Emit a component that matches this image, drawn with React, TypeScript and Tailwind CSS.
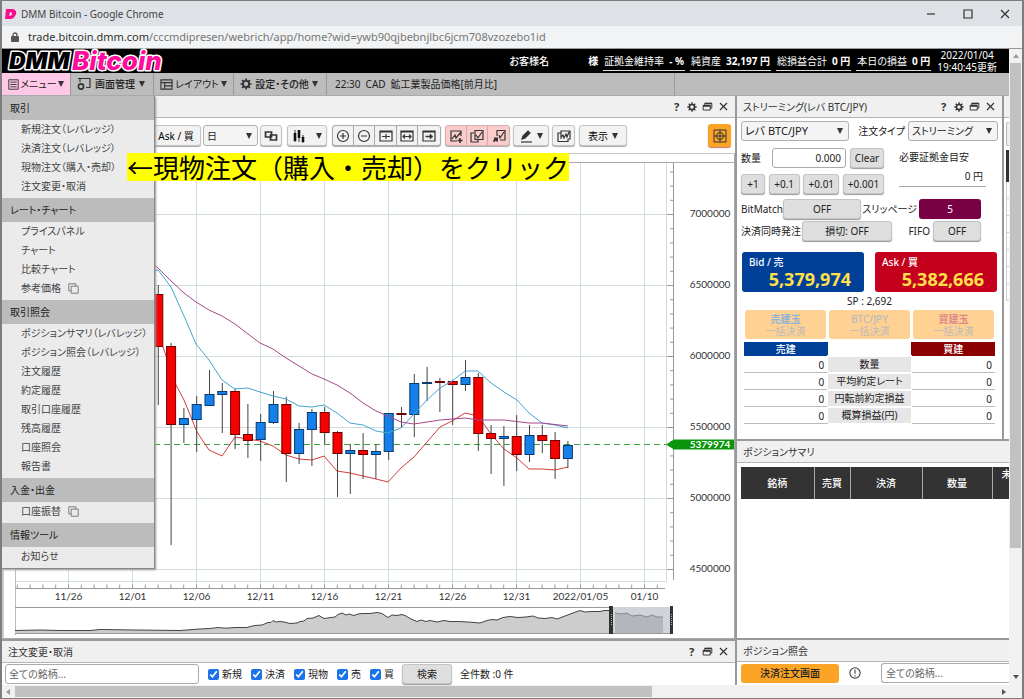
import React from 'react';

const MENU = [
  { title: '取引', items: ['新規注文（レバレッジ）', '決済注文（レバレッジ）', '現物注文（購入・売却）', '注文変更・取消'] },
  { title: 'レート・チャート', items: ['プライスパネル', 'チャート', '比較チャート', '参考価格'], external: '参考価格' },
  {
    title: '取引照会',
    items: [
      'ポジションサマリ（レバレッジ）',
      'ポジション照会（レバレッジ）',
      '注文履歴',
      '約定履歴',
      '取引口座履歴',
      '残高履歴',
      '口座照会',
      '報告書',
    ],
  },
  { title: '入金・出金', items: ['口座振替'], external: '口座振替' },
  { title: '情報ツール', items: ['お知らせ'] },
];

// [high, body top, body bottom, low, rising]
const CANDLES: [number, number, number, number, boolean][] = [
  [285, 294, 346, 405, false],
  [343, 346, 424, 545, false],
  [408, 418, 424, 443, true],
  [396, 404, 419, 452, true],
  [370, 394, 405, 405, true],
  [383, 391, 394, 433, true],
  [388, 391, 434, 449, false],
  [404, 434, 440, 458, false],
  [414, 422, 439, 461, true],
  [391, 404, 422, 424, true],
  [397, 404, 453, 482, false],
  [423, 429, 453, 464, true],
  [409, 412, 429, 466, true],
  [407, 412, 432, 444, false],
  [431, 432, 453, 497, false],
  [444, 450, 453, 494, true],
  [433, 450, 454, 479, false],
  [444, 451, 454, 479, true],
  [413, 413, 451, 460, true],
  [407, 413, 414, 428, false],
  [374, 383, 414, 437, true],
  [367, 382, 383, 401, true],
  [378, 381, 382, 412, false],
  [380, 381, 384, 425, false],
  [360, 377, 384, 391, true],
  [373, 377, 433, 451, false],
  [425, 433, 438, 474, false],
  [426, 436, 438, 486, true],
  [415, 436, 454, 471, false],
  [425, 435, 454, 462, true],
  [425, 435, 440, 453, false],
  [432, 440, 458, 479, false],
  [441, 445, 458, 468, true],
];

const LINE_FAST =
  '154,271 158,270 171,287 184,316 196,344 209,360 222,380 235,389 248,388 260,392 273,396 286,399 299,406 312,407 324,405 337,413 350,423 363,425 376,431 388,433 401,428 414,414 427,400 440,388 452,381 465,371 478,371 491,383 504,392 517,400 529,413 542,423 555,425 568,428';
const LINE_SLOW =
  '154,265 158,268 171,281 184,293 196,302 209,310 222,316 235,324 248,334 260,343 273,349 286,358 299,366 312,374 324,379 337,385 350,393 363,403 376,411 388,416 401,422 414,424 427,422 440,420 452,419 465,418 478,420 504,420 529,423 542,423 568,426';
const LINE_LOW =
  '163,347 176,385 184,400 197,432 209,450 222,456 235,437 248,439 260,441 273,446 286,455 299,459 312,460 324,456 337,471 350,473 363,476 376,479 388,482 401,468 414,457 427,442 440,427 452,421 465,413 478,416 491,434 504,449 517,458 529,469 542,469 555,470 568,467';
const NAV_LINE =
  '15,630.5 40,630 60,630.5 90,630.5 100,629.5 135,630 180,630.5 200,629 210,628.5 218,627.5 226,628.2 235,627.5 247,627.5 250,626.5 255,625.5 262,625 268,622.5 271,622.5 273,620.5 276,622 280,621.5 284,622 290,623.5 297,623 300,621.5 304,621 307,618.5 313,618 319,615.5 324,618.5 331,617.5 335,617 338,614.5 342,613 346,615 349,614 354,615.5 358,614 362,613.5 370,613.5 377,612.5 382,613.5 388,617.5 392,615 397,615.5 402,614.5 406,616 411,619 417,621.5 421,620 426,621.5 430,620.5 437,622 444,620.5 450,621.5 458,621.5 468,622 480,623 487,620.5 492,619.5 497,620 503,617.5 510,616.5 518,617.5 526,617 533,616 538,618 545,618.5 552,617.5 557,619 565,616 573,613 580,610.5 585,612 592,611.5 600,611.5 604,610.5 609,610.5';
const NAV_SELECTED = '615,613 621,614 627,613 632,616 640,615 647,617 652,615 657,617 663,617';

const DATES = ['11/26', '12/01', '12/06', '12/11', '12/16', '12/21', '12/26', '12/31', '2022/01/05', '01/10'];
const PRICES = ['7000000', '6500000', '6000000', '5500000', '5000000', '4500000'];

const grayButton = 'shrink-0 rounded-[3px] border border-[#c4c4c4] bg-[#dedede] text-[#222] shadow-[0_1px_1px_#999]';
const toolButton = 'flex h-[21px] shrink-0 items-center justify-center rounded-[3px] border border-[#c4c4c4] bg-[#f2f2f2] shadow-[0_1px_1px_#aaa]';

type IconProps = { children: React.ReactNode; className?: string };

const Icon = ({ children, className = 'size-[14px]' }: IconProps) => (
  <svg viewBox="0 0 14 14" className={className} fill="none" stroke="#333" strokeWidth="1.2" aria-hidden="true">
    {children}
  </svg>
);

const GearIcon = ({ className = 'size-[12px]' }: { className?: string }) => (
  <Icon className={className}>
    <circle cx="7" cy="7" r="3.6" strokeWidth="2.2" />
    <path d="M7 0.5v2.5M7 11v2.5M0.5 7h2.5M11 7h2.5M2.4 2.4l1.8 1.8M9.8 9.8l1.8 1.8M11.6 2.4l-1.8 1.8M4.2 9.8l-1.8 1.8" strokeWidth="2" />
  </Icon>
);

const CopyIcon = () => (
  <Icon className="size-[11px]">
    <path d="M4 4h9v9H4zM4 10H1V1h9v3" stroke="#777" />
  </Icon>
);

const Caret = ({ className = '' }: { className?: string }) => (
  <svg viewBox="0 0 6 6" className={`size-[6px] shrink-0 ${className}`} aria-hidden="true">
    <path d="M0 0h6L3 6z" fill="#333" />
  </svg>
);

const PanelTitle = ({ title, tools }: { title: string; tools: 'full' | 'short' | 'none' }) => (
  <div className="flex h-[22px] shrink-0 items-center border-b border-[#b5b5b5] bg-[#f0f0f0] px-[6px] text-[#333]">
    <h2 className="whitespace-nowrap">{title}</h2>
    {tools !== 'none' && (
      <div className="ml-auto flex items-center gap-[5px]">
        <button aria-label="ヘルプ" className="flex w-[11px] justify-center text-[11px] font-bold">?</button>
        {tools === 'full' && (
          <button aria-label="設定"><GearIcon className="size-[10px]" /></button>
        )}
        <button aria-label="別ウィンドウ">
          <Icon className="size-[11px]">
            <path d="M3.5 5V3h9v6h-2M1.5 5.5h9v6h-9z" />
            <path d="M1.5 6.2h9M3.5 3.2h9" strokeWidth="2" />
          </Icon>
        </button>
        <button aria-label="閉じる">
          <Icon className="size-[11px]"><path d="M2.5 2.5l9 9M11.5 2.5l-9 9" strokeWidth="1.5" /></Icon>
        </button>
      </div>
    )}
  </div>
);

type SelectProps = { label: string; value: string; className: string };

const Select = ({ label, value, className }: SelectProps) => (
  <span className={`relative flex shrink-0 items-center ${className}`}>
    <select
      aria-label={label}
      className="h-full w-full appearance-none rounded-[3px] border border-[#b0b0b0] bg-[#f4f4f4] px-[3px] text-[#222]"
    >
      <option>{value}</option>
    </select>
    <Caret className="pointer-events-none absolute right-[6px]" />
  </span>
);

const TitleBar = () => (
  <div className="flex h-[25px] items-center bg-[#dee1e6] pl-[3px] text-[10px] text-[#444]">
    <svg viewBox="0 0 12 12" className="mr-[4px] size-[12px]" aria-hidden="true">
      <path d="M1 1h5c4 0 6 2 5 5s-3 5-6 5H0zM5 4L4 8c2 0 3-1 3-2s0-2-2-2z" fill="#ff0c8e" fillRule="evenodd" />
    </svg>
    <span>DMM Bitcoin - Google Chrome</span>
    <div className="ml-auto flex items-center gap-[23px] pr-[10px]">
      <button aria-label="最小化"><Icon><path d="M3 7h8" /></Icon></button>
      <button aria-label="最大化"><Icon><path d="M3 3h8v8H3z" /></Icon></button>
      <button aria-label="閉じる"><Icon><path d="M3 3l8 8M11 3l-8 8" /></Icon></button>
    </div>
  </div>
);

const AddressBar = () => (
  <div className="flex h-[23px] items-center border-b border-[#999] bg-[#f1f3f4] pl-[9px] text-[11px] text-[#777]">
    <svg viewBox="0 0 8 10" className="mr-[9px] h-[10px] w-[8px]" aria-hidden="true">
      <rect x="0" y="4" width="8" height="6" rx="1" fill="#555" />
      <path d="M2 5V3a2 2 0 0 1 4 0v2" fill="none" stroke="#555" strokeWidth="1.3" />
    </svg>
    <span><span className="text-[#333]">trade.bitcoin.dmm.com</span>/cccmdipresen/webrich/app/home?wid=ywb90qjbebnjlbc6jcm708vzozebo1id</span>
  </div>
);

const Stat = ({ label, value }: { label: string; value: string }) => (
  <div className="flex h-[19px] items-center gap-[5px] border-b border-[#ddd] px-px">
    <span>{label}</span>
    <b>{value}</b>
  </div>
);

const AppHeader = () => (
  <header className="flex h-[24px] items-center bg-black pl-[3px] text-[10px] whitespace-nowrap text-white">
    <svg viewBox="0 0 166 24" className="h-[24px] w-[166px] overflow-visible" role="img" aria-label="DMM Bitcoin">
      <g fontFamily="Inter, sans-serif" fontStyle="italic" stroke="#fff" strokeWidth="3" strokeLinejoin="round" paintOrder="stroke">
        <text x="4" y="20" fontWeight="900" fontSize="23" fill="#000">DMM</text>
        <text x="67" y="21" fontWeight="800" fontSize="26" fill="#ff0c9c">Bitcoin</text>
      </g>
    </svg>
    <div className="ml-auto flex items-center gap-[5px]">
      <span className="mr-[34px] font-medium">お客様名</span>
      <span className="font-bold">様</span>
      <Stat label="証拠金維持率" value="- %" />
      <Stat label="純資産" value="32,197 円" />
      <Stat label="総損益合計" value="0 円" />
      <Stat label="本日の損益" value="0 円" />
    </div>
    <div className="mr-[12px] ml-[6px] text-center leading-[12px]">
      <div>2022/01/04</div>
      <div>19:40:45更新</div>
    </div>
  </header>
);

const menuTab = 'flex items-center justify-between border-r border-[#999] px-[6px]';

const MenuBar = () => (
  <nav className="flex h-[23px] border-b border-[#aaa] bg-[#bcbcbc] whitespace-nowrap text-[#222]">
    <button className={`${menuTab} w-[69px] bg-[#ffc8e6]`}>
      <Icon className="size-[11px]"><path d="M1 1h12v12H1zM3 4h8M3 7h8M3 10h8" /></Icon>
      メニュー
      <Caret />
    </button>
    <button className={`${menuTab} w-[83px] font-medium`}>
      <Icon className="size-[14px]">
        <path d="M3 5V1.500h10v9H9M1 1.500h12" />
        <circle cx="4" cy="9.500" r="2.600" strokeWidth="1.600" />
      </Icon>
      画面管理
      <Caret className="mr-[2px]" />
    </button>
    <button className={`${menuTab} w-[80px]`}>
      <Icon className="size-[13px]"><path d="M1 2h12v10H1zM1 5h12M5 5v7M5 8.500h8" /></Icon>
      レイアウト
      <Caret />
    </button>
    <button className={`${menuTab} w-[93px] font-medium`}>
      <GearIcon />
      設定・その他
      <Caret className="mr-[2px]" />
    </button>
    <p className="flex w-[348px] items-center gap-[5px] border-r border-[#999] pl-[8px]">
      <span>22:30</span>
      <span>CAD</span>
      <span>鉱工業製品価格[前月比]</span>
    </p>
  </nav>
);

const DropdownMenu = () => (
  <div className="absolute top-0 left-0 z-10 w-[153px] border-r border-b border-[#888] bg-[#ebebeb] text-[#444] shadow-[1px_1px_2px_#999]">
    {MENU.map((group) => (
      <section key={group.title}>
        <h3 className="bg-[#bcbcbc] pl-[8px] leading-[24px] text-[#222]">{group.title}</h3>
        <ul className="pb-[2px]">
          {group.items.map((item) => (
            <li key={item}>
              <a href="#" className="flex items-center gap-[7px] pl-[19px] leading-[19px] whitespace-nowrap">
                {item}
                {group.external === item && <CopyIcon />}
              </a>
            </li>
          ))}
        </ul>
      </section>
    ))}
  </div>
);

const ChartToolbar = () => (
  <div className="flex h-[36px] items-center border-b border-[#c8c8c8] bg-white pr-[4px] pl-[149px]">
    <button className={`${toolButton} w-[50px]`}>Ask / 買</button>
    <Select label="足種" value="日" className="ml-[2px] h-[21px] w-[55px]" />
    <button aria-label="連動" className={`${toolButton} ml-[2px] w-[22px]`}>
      <Icon><path d="M1.500 3h6v5h-6zM6.500 6h6v5h-6z" strokeWidth="1.700" /></Icon>
    </button>
    <button aria-label="チャート種別" className={`${toolButton} ml-[5px] w-[40px] gap-[10px]`}>
      <Icon><path d="M3 1v12M7 5v8M11 6v8" strokeWidth="1" /><path d="M3 4v8M7 1v8M11 8v5" strokeWidth="2.600" stroke="#111" /></Icon>
      <Caret />
    </button>
    <div className="ml-[5px] flex h-[21px] shrink-0 divide-x divide-[#aaa] overflow-hidden rounded-[3px] border border-[#aaa] bg-[#f2f2f2] shadow-[0_1px_1px_#aaa]">
      <button aria-label="拡大" className="flex w-[21px] items-center justify-center">
        <Icon><circle cx="7" cy="7" r="5.500" /><path d="M4 7h6M7 4v6" /></Icon>
      </button>
      <button aria-label="縮小" className="flex w-[21px] items-center justify-center">
        <Icon><circle cx="7" cy="7" r="5.500" /><path d="M4 7h6" /></Icon>
      </button>
      <button aria-label="全体表示" className="flex w-[22px] items-center justify-center">
        <Icon><path d="M1 2h12v10H1zM1 3h12M3 7.500h8M7 5v5" /></Icon>
      </button>
      <button aria-label="横幅調整" className="flex w-[21px] items-center justify-center">
        <Icon><path d="M1 2h12v10H1zM1 3h12M3 7.500h8M5 5.500l-2 2 2 2M9 5.500l2 2-2 2" /></Icon>
      </button>
      <button aria-label="最新へ" className="flex w-[22px] items-center justify-center">
        <Icon><path d="M1 2h12v10H1zM1 3h12" /><path d="M3.500 7.500h5" strokeWidth="1.600" /><path d="M8 5l3 2.500L8 10z" fill="#333" strokeWidth="0.500" /></Icon>
      </button>
    </div>
    <div className="ml-[4px] flex h-[21px] shrink-0 divide-x divide-[#d9a5a5] overflow-hidden rounded-[3px] border border-[#d3b0b0] bg-[#facccc] shadow-[0_1px_1px_#aaa]">
      <button aria-label="描画追加" className="flex w-[21px] items-center justify-center">
        <Icon><path d="M8 12H2V2h10v5M3 10l3-4 1 3 5-6" /><path d="M11 9v5M8.500 11.500h5" strokeWidth="1.600" /></Icon>
      </button>
      <button aria-label="描画複製" className="flex w-[21px] items-center justify-center">
        <Icon><path d="M5 1.500h8v9H5zM4 4H1v9h7v-2M6 6l2 3 4-6" /></Icon>
      </button>
      <button aria-label="描画移動" className="flex w-[21px] items-center justify-center">
        <Icon><path d="M5 7V1.500h8V11H8M7 6l1 3 4-6" /><path d="M1.500 12.500l3-3M2 9.500h3v3" strokeWidth="2" /></Icon>
      </button>
    </div>
    <button aria-label="ペン" className={`${toolButton} ml-[3px] w-[36px] gap-[4px]`}>
      <Icon><path d="M2 13h11" /><path d="M3 10l1-3 5-5 2 2-5 5z" fill="#333" /></Icon>
      <Caret />
    </button>
    <button aria-label="重ね表示" className={`${toolButton} ml-[3px] w-[23px]`}>
      <Icon><path d="M4 3V2h9v8h-2M11 10v2.500H1V4h3M4 3v7M4 8l2-2 1 3 2-4 1 3 2-5" /></Icon>
    </button>
    <button className={`${toolButton} ml-[4px] w-[48px] gap-[4px]`}>表示 <Caret /></button>
    <button aria-label="十字線" className="ml-auto flex size-[23px] items-center justify-center rounded-[3px] bg-[#fba426] shadow-[0_1px_1px_#b76]">
      <Icon><path d="M1 1h12v12H1zM7 1v12M1 7h12" strokeWidth="1" /><circle cx="7" cy="7" r="3.500" strokeWidth="1" /></Icon>
    </button>
  </div>
);

const Chart = () => (
  <svg viewBox="4 163 730 475" className="block w-full" role="img" aria-label="BTC/JPY 日足チャート">
    <rect x="4" y="163" width="730" height="475" fill="#fff" />
    <g stroke="#d3dcdc">
      {DATES.map((d, i) => <path key={d} d={`M${68.5 + i * 64} 163V588`} />)}
      {PRICES.map((p, i) => <path key={p} d={`M15 ${214.5 + i * 71}H667`} />)}
      <path d="M15 581.500H666M666.500 163V582" />
    </g>
    <path d="M15.500 163V635" stroke="#bbb" />
    <g stroke="#999">
      <path d="M15 588.500H665M673.500 163V580" />
      {Array.from({ length: 51 }, (_, i) => <path key={i} d={`M${17.3 + i * 12.8} 584.500v4`} />)}
      {Array.from({ length: 29 }, (_, i) => <path key={i} d={`M670 ${171.900 + i * 14.2}h3`} />)}
      {PRICES.map((p, i) => <path key={p} d={`M667 ${214.5 + i * 71}h6`} />)}
    </g>
    <g fontFamily="Lato, sans-serif" fontSize="10" fill="#333" textAnchor="middle">
      {DATES.map((d, i) => <text key={d} x={68.5 + i * 64} y="600">{d}</text>)}
      {PRICES.map((p, i) => <text key={p} x="710" y={217 + i * 71}>{p}</text>)}
    </g>
    <path d="M154 444.500H666" stroke="#3aa63a" strokeDasharray="6 4" />
    <polyline points={LINE_LOW} fill="none" stroke="#d43c3c" />
    {CANDLES.map(([high, top, bottom, low, up], i) => {
      const x = 158.3 + i * 12.8;
      return (
        <g key={i}>
          <path d={`M${x} ${high}V${low}`} stroke="#444" />
          <rect
            x={x - 4.5}
            y={top + 0.5}
            width="9"
            height={Math.max(bottom - top, 1)}
            fill={up ? '#1580e8' : '#f80000'}
            stroke={up ? '#083a70' : '#700000'}
          />
        </g>
      );
    })}
    <g fill="none">
      <polyline points={LINE_FAST} stroke="#45a5cf" />
      <polyline points={LINE_SLOW} stroke="#a5488a" />
    </g>
    <path d="M666 444.500l8-5h60v10h-60z" fill="#0a960a" />
    <text x="710" y="448" fontFamily="Lato, sans-serif" fontSize="10" fontWeight="700" fill="#fff" textAnchor="middle">5379974</text>
    {/* range navigator */}
    <path d="M15 607.500H672M15 633.500H672" stroke="#999" />
    <polygon points={`15,633 ${NAV_LINE} 609,633`} fill="#cdcdcd" />
    <polyline points={NAV_LINE} fill="none" stroke="#444" />
    <rect x="613" y="607" width="58" height="26" fill="#d0d3d9" />
    <polygon points={`615,633 ${NAV_SELECTED} 663,633`} fill="#b3b6bd" />
    <polyline points={NAV_SELECTED} fill="none" stroke="#85898f" />
    <rect x="609" y="606" width="4" height="28" fill="#333" />
    <path d="M611.500 614v12" stroke="#aaa" strokeDasharray="1 1" />
    <rect x="670" y="606" width="3" height="28" fill="#333" />
    <path d="M671.500 614v12" stroke="#aaa" strokeDasharray="1 1" />
  </svg>
);

const OrderFilters = () => (
  <div className="flex h-[22px] items-center bg-white pl-[3px] whitespace-nowrap text-[#222]">
    <input
      aria-label="銘柄"
      placeholder="全ての銘柄..."
      className="h-[20px] w-[194px] rounded-[3px] border border-[#aaa] px-[3px] placeholder:text-[#666]"
    />
    <div className="ml-[9px] flex gap-[9px]">
      {['新規', '決済', '現物', '売', '買'].map((label) => (
        <label key={label} className="flex items-center gap-[3px]">
          <input type="checkbox" defaultChecked className="size-[11px] accent-[#1a73e8]" />
          {label}
        </label>
      ))}
    </div>
    <button className={`${grayButton} ml-[8px] h-[20px] w-[50px]`}>検索</button>
    <span className="ml-[8px]">全件数 :0 件</span>
  </div>
);

const OrderForm = () => (
  <div className="flex flex-col px-[4px] pt-[3px] whitespace-nowrap text-[#222]">
    <div className="flex h-[20px] items-center">
      <Select label="銘柄" value="レバ BTC/JPY" className="h-[20px] w-[108px] text-[11px]" />
      <span className="mr-[3px] ml-auto">注文タイプ</span>
      <Select label="注文タイプ" value="ストリーミング" className="h-[20px] w-[90px]" />
    </div>
    <div className="mt-[7px] flex gap-[15px]">
      <div className="w-[143px]">
        <div className="flex items-center">
          <label htmlFor="qty" className="w-[31px]">数量</label>
          <input id="qty" defaultValue="0.000" className="h-[20px] w-[74px] rounded-[3px] border border-[#aaa] px-[4px] text-right" />
          <button className={`${grayButton} ml-[4px] h-[20px] w-[34px]`}>Clear</button>
        </div>
        <div className="mt-[6px] flex justify-between">
          <button className={`${grayButton} h-[20px] w-[24px]`}>+1</button>
          <button className={`${grayButton} h-[20px] w-[31px]`}>+0.1</button>
          <button className={`${grayButton} h-[20px] w-[36px]`}>+0.01</button>
          <button className={`${grayButton} h-[20px] w-[41px]`}>+0.001</button>
        </div>
      </div>
      <div className="w-[87px] leading-[19px]">
        <p>必要証拠金目安</p>
        <p className="border-b border-[#aaa] pr-[3px] text-right">0 円</p>
      </div>
    </div>
    <div className="mt-[4px] flex h-[21px] items-center">
      <span className="w-[42px]">BitMatch</span>
      <button className={`${grayButton} h-[20px] w-[78px]`}>OFF</button>
      <span className="mr-[2px] ml-auto">スリッページ</span>
      <button className="mr-[17px] h-[20px] w-[62px] shrink-0 rounded-[3px] bg-[#7a0046] text-white">5</button>
    </div>
    <div className="mt-px flex h-[21px] items-center">
      <span className="w-[61px]">決済同時発注</span>
      <button className={`${grayButton} h-[20px] w-[90px]`}>損切: OFF</button>
      <span className="mr-[3px] ml-auto">FIFO</span>
      <button className={`${grayButton} mr-[17px] h-[20px] w-[48px]`}>OFF</button>
    </div>
    <div className="mt-[11px] flex justify-between px-px font-medium text-white">
      <button className="h-[40px] w-[122px] rounded-[3px] bg-[#003f98] px-[7px] text-left leading-[14px]">
        Bid / 売
        <span className="block pr-[6px] text-right text-[18px] leading-[20px] font-bold text-[#ffe04a]">5,379,974</span>
      </button>
      <button className="h-[40px] w-[122px] rounded-[3px] bg-[#c4001c] px-[7px] text-left leading-[14px]">
        Ask / 買
        <span className="block pr-[6px] text-right text-[18px] leading-[20px] font-bold text-[#ffe04a]">5,382,666</span>
      </button>
    </div>
    <p className="text-center leading-[18px]">SP : 2,692</p>
    <div className="flex gap-[3px] pl-[4px] text-center leading-[12px] text-[#bbb]">
      <button className="h-[29px] w-[81px] rounded-[3px] bg-[#ffd193]"><b className="block text-[#8fb4d8]">売建玉</b>一括決済</button>
      <button className="h-[29px] w-[81px] rounded-[3px] bg-[#ffd193]"><b className="block font-medium">BTC/JPY</b>一括決済</button>
      <button className="h-[29px] w-[81px] rounded-[3px] bg-[#ffd193]"><b className="block text-[#e08a8a]">買建玉</b>一括決済</button>
    </div>
    <table className="mt-[3px] ml-[3px] w-[251px] table-fixed leading-[14px]">
      <thead>
        <tr className="text-white">
          <th className="bg-[#003f98] font-medium">売建</th>
          <td />
          <th className="bg-[#8b0000] font-medium">買建</th>
        </tr>
      </thead>
      <tbody>
        {['数量', '平均約定レート', '円転前約定損益', '概算損益(円)'].map((label) => (
          <tr key={label}>
            <td className="border-b border-[#bbb] pt-[2px] pr-[3px] text-right">0</td>
            <th className="border-x border-t-2 border-b border-white bg-[#e6e6e6] font-normal">{label}</th>
            <td className="border-b border-[#bbb] pt-[2px] pr-[3px] text-right">0</td>
          </tr>
        ))}
      </tbody>
    </table>
  </div>
);

const SideColumn = () => (
  <div className="flex w-[274px] shrink-0 flex-col overflow-hidden border-l-2 border-[#999] bg-white">
    <div className="flex h-[345px] border-b-2 border-[#999]">
      <div className="w-[267px] shrink-0 border-r-2 border-[#999]">
        <PanelTitle title="ストリーミング(レバ BTC/JPY)" tools="full" />
        <OrderForm />
      </div>
      {/* edge of the next panel, clipped by the viewport */}
      <div className="flex grow flex-col">
        <div className="h-[22px] border-b border-[#b5b5b5] bg-[#f0f0f0]" />
        <div className="mt-[4px] ml-[2px] h-[24px] rounded-l-[2px] border border-r-0 border-[#bbb] bg-[#eee]" />
        <div className="mt-[4px] ml-[2px] h-[32px] bg-[#333]" />
        {[0, 1, 2, 3, 4, 5, 6].map((i) => (
          <div key={i} className="ml-[2px] h-[17px] border-b border-l border-[#ccc]" />
        ))}
      </div>
    </div>
    <PanelTitle title="ポジションサマリ" tools="none" />
    <div className="h-[177px] border-b-2 border-[#999] pt-[4px] pl-[4px]">
      <table className="w-[297px] table-fixed bg-[#333] text-white">
        <thead>
          <tr className="h-[32px] divide-x divide-[#aaa]">
            <th className="w-[73px] font-medium">銘柄</th>
            <th className="w-[36px] font-medium">売買</th>
            <th className="w-[72px] font-medium">決済</th>
            <th className="w-[70px] font-medium">数量</th>
            <th className="pl-[9px] text-left align-top font-medium">未</th>
          </tr>
        </thead>
      </table>
    </div>
    <PanelTitle title="ポジション照会" tools="none" />
    <div className="flex h-[22px] items-center pl-[4px]">
      <button className="h-[19px] w-[98px] shrink-0 rounded-[3px] bg-[#fba426] font-medium text-[#222]">決済注文画面</button>
      <Icon className="mx-[10px] size-[12px] shrink-0"><circle cx="7" cy="7" r="6" /><path d="M7 3v5M7 9.500v1.500" /></Icon>
      <input
        aria-label="ポジションの銘柄"
        placeholder="全ての銘柄..."
        className="ml-[10px] h-[20px] w-[140px] shrink-0 rounded-l-[3px] border border-r-0 border-[#aaa] px-[4px] placeholder:text-[#666]"
      />
    </div>
  </div>
);

export default function App() {
  return (
    <div className="min-h-screen overflow-hidden border-x-2 border-t border-b border-[#7d7d7d] bg-[#f1f1f1] font-['Noto_Sans','Noto_Sans_CJK_JP',sans-serif] text-[10px] leading-[14px] [font-feature-settings:'palt']">
      <TitleBar />
      <AddressBar />
      <div className="flex">
        <main className="min-w-0 grow">
          <AppHeader />
          <MenuBar />
          <div className="relative flex">
            <div className="min-w-0 grow">
              <PanelTitle title="" tools="full" />
              <ChartToolbar />
              <div className="ml-[3px] h-[9px] border-r border-b border-[#aaa] bg-white" />
              <div className="border-r border-b border-l-2 border-[#aaa] border-l-[#ccc] bg-white">
                <Chart />
              </div>
              <div className="h-[2px] border-b-2 border-[#999]" />
              <PanelTitle title="注文変更・取消" tools="short" />
              <OrderFilters />
            </div>
            <SideColumn />
            <DropdownMenu />
            <p className="absolute top-[57px] left-[125px] z-20 bg-[#ffff00] font-['Noto_Sans_CJK_JP',sans-serif] text-[26px] leading-[28px] whitespace-nowrap text-black [font-feature-settings:normal]">
              ←現物注文（購入・売却）をクリック
            </p>
          </div>
        </main>
        <div className="flex w-[13px] shrink-0 flex-col items-center">
          <svg viewBox="0 0 6 4" className="my-[5px] h-[4px] w-[6px]" aria-hidden="true"><path d="M0 4h6L3 0z" fill="#999" /></svg>
          <div className="h-[485px] w-[11px] bg-[#c1c1c1]" />
          <svg viewBox="0 0 6 4" className="mt-auto mb-[6px] h-[4px] w-[6px]" aria-hidden="true"><path d="M0 0h6L3 4z" fill="#555" /></svg>
        </div>
      </div>
      <div className="flex h-[13px] items-center pr-[16px] pl-[4px]">
        <svg viewBox="0 0 4 6" className="mr-[5px] h-[6px] w-[4px]" aria-hidden="true"><path d="M4 0v6L0 3z" fill="#999" /></svg>
        <div className="h-[11px] w-[637px] bg-[#c1c1c1]" />
        <svg viewBox="0 0 4 6" className="ml-auto h-[6px] w-[4px]" aria-hidden="true"><path d="M0 0v6l4-3z" fill="#555" /></svg>
      </div>
    </div>
  );
}
